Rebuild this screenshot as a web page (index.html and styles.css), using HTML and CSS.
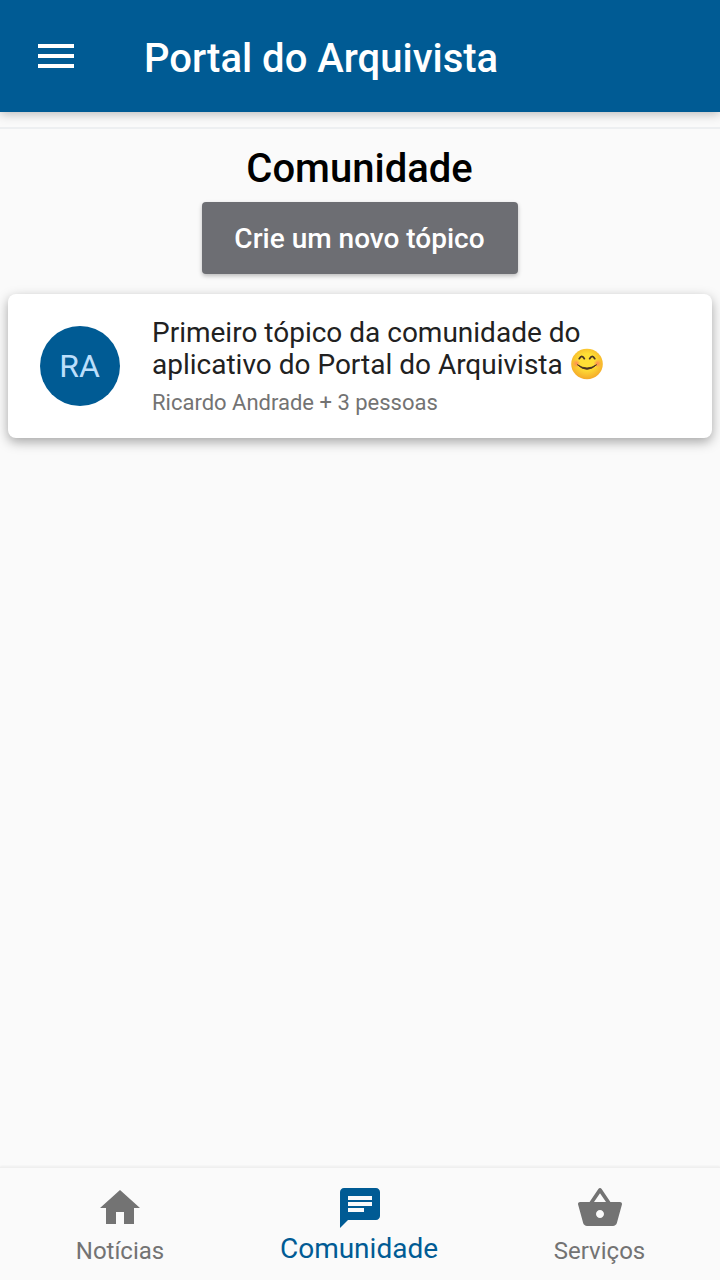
FILE: index.html
```html
<!DOCTYPE html>
<html lang="pt-BR">
<head>
<meta charset="utf-8">
<title>Portal do Arquivista</title>
<link rel="stylesheet" href="styles.css">
</head>
<body>
<div class="app">
  <header class="toolbar">
    <svg class="icon" viewBox="0 0 24 24"><path d="M3 18h18v-2H3v2zm0-5h18v-2H3v2zm0-7v2h18V6H3z"/></svg>
    <span class="toolbar-title">Portal do Arquivista</span>
  </header>
  <main class="content">
    <h1 class="heading">Comunidade</h1>
    <button class="create">Crie um novo tópico</button>
    <article class="card">
      <div class="avatar">RA</div>
      <div class="topic">
        <div class="topic-title">Primeiro tópico da comunidade do<br>aplicativo do Portal do Arquivista
          <svg class="emoji" viewBox="0 0 32 32" role="img" aria-label="Rosto sorridente">
            <defs>
              <radialGradient id="face" cx=".5" cy=".42" r=".58"><stop offset=".45" stop-color="#ffdf35"/><stop offset="1" stop-color="#f4a929"/></radialGradient>
              <radialGradient id="cheek"><stop offset="0" stop-color="#ff795d" stop-opacity=".8"/><stop offset="1" stop-color="#ff795d" stop-opacity="0"/></radialGradient>
            </defs>
            <ellipse cx="16" cy="16" rx="15.8" ry="15.2" fill="url(#face)"/>
            <circle cx="5.5" cy="15.5" r="4" fill="url(#cheek)"/>
            <circle cx="26.5" cy="15.5" r="4" fill="url(#cheek)"/>
            <path d="M8.3 10.6q2.5-4.4 5 0M18.7 10.6q2.5-4.4 5 0" fill="none" stroke="#493323" stroke-width="1.9" stroke-linecap="round"/>
            <path d="M6.4 16.7q9.6 6.6 19.2 0Q16 26 6.4 16.7z" fill="#493323" stroke="#493323" stroke-width=".9" stroke-linejoin="round"/>
          </svg>
        </div>
        <div class="topic-people">Ricardo Andrade + 3 pessoas</div>
      </div>
    </article>
  </main>
  <nav class="tabs">
    <a class="tab">
      <svg class="icon" viewBox="0 0 24 24"><path d="M10 20v-6h4v6h5v-8h3L12 3 2 12h3v8z"/></svg>
      <span class="tab-label">Notícias</span>
    </a>
    <a class="tab tab-active">
      <svg class="icon" viewBox="0 0 24 24"><path d="M20 2H4c-1.1 0-1.99.9-1.99 2L2 22l4-4h14c1.1 0 2-.9 2-2V4c0-1.1-.9-2-2-2zM6 9h12v2H6V9zm8 5H6v-2h8v2zm4-6H6V6h12v2z"/></svg>
      <span class="tab-label">Comunidade</span>
    </a>
    <a class="tab">
      <svg class="icon" viewBox="0 0 24 24"><path d="M17.21 9l-4.38-6.56c-.19-.28-.51-.42-.83-.42-.32 0-.64.14-.83.43L6.79 9H2c-.55 0-1 .45-1 1 0 .09.01.18.04.27l2.54 9.27c.23.84 1 1.46 1.92 1.46h13c.92 0 1.69-.62 1.93-1.46l2.54-9.27L23 10c0-.55-.45-1-1-1h-4.79zM9 9l3-4.4L15 9H9zm3 8c-1.1 0-2-.9-2-2s.9-2 2-2 2 .9 2 2-.9 2-2 2z"/></svg>
      <span class="tab-label">Serviços</span>
    </a>
  </nav>
</div>
</body>
</html>
```
FILE: styles.css
```css
* { box-sizing: border-box; }
body { margin: 0; font-family: Roboto, sans-serif; background: #fafafa; }
.app { display: flex; flex-direction: column; height: 1280px; }
.icon { width: 48px; height: 48px; fill: currentColor; flex: none; }
.toolbar {
  display: flex; align-items: center; gap: 64px; height: 112px;
  padding: 0 32px; color: #fff; background: #005b94;
  box-shadow: 0 2px 10px rgba(0, 0, 0, .26);
}
.toolbar-title { font-size: 40px; font-weight: 500; line-height: 48px; padding-top: 6px; }
.content {
  flex: 1; display: flex; flex-direction: column; align-items: center;
  margin-top: 15px; padding: 16px 8px 0; border-top: 2px solid #edeff1;
}
.heading { margin: 0; padding-right: 1px; font-size: 40px; font-weight: 500; line-height: 48px; color: #000; }
.create {
  width: 316px; height: 72px; margin-top: 9px; padding: 1px 1px 0 0; border: 0; border-radius: 4px;
  font: 500 28px/71px Roboto, sans-serif; color: #fff; background: #6d6e73;
  box-shadow: 0 2px 4px rgba(0, 0, 0, .25);
}
.card {
  display: flex; align-items: center; gap: 32px; width: 100%; height: 144px;
  margin-top: 20px; padding: 0 32px; border-radius: 8px; background: #fff;
  box-shadow: 0 4px 12px rgba(0, 0, 0, .34);
}
.avatar {
  width: 80px; height: 80px; border-radius: 50%; background: #005b94; color: #bbdefb;
  padding-right: 1px; font-size: 32px; line-height: 80px; text-align: center;
}
.topic { padding-top: 2px; }
.topic-title { font-size: 28px; line-height: 32px; color: #212121; white-space: nowrap; }
.emoji { width: 32px; height: 32px; vertical-align: -2px; margin: -4px 0 -4px 1px; display: inline-block; }
.topic-people { margin-top: 8px; font-size: 22px; line-height: 28px; color: #737373; }
.tabs {
  display: flex; height: 113px; border-top: 1px solid #efefef; color: #737373; background: #fafafa;
  box-shadow: 0 -1px 2px rgba(0, 0, 0, .05);
}
.tab { flex: 1; display: flex; flex-direction: column; align-items: center; padding-top: 16px; }
.tab-label { padding: 1px 0 0; font-size: 24px; line-height: 36px; }
.tab:last-child .tab-label { padding-right: 1px; }
.tab-active { color: #005b94; }
.tab-active .tab-label { padding-right: 2px; font-size: 28px; line-height: 32px; }
```
